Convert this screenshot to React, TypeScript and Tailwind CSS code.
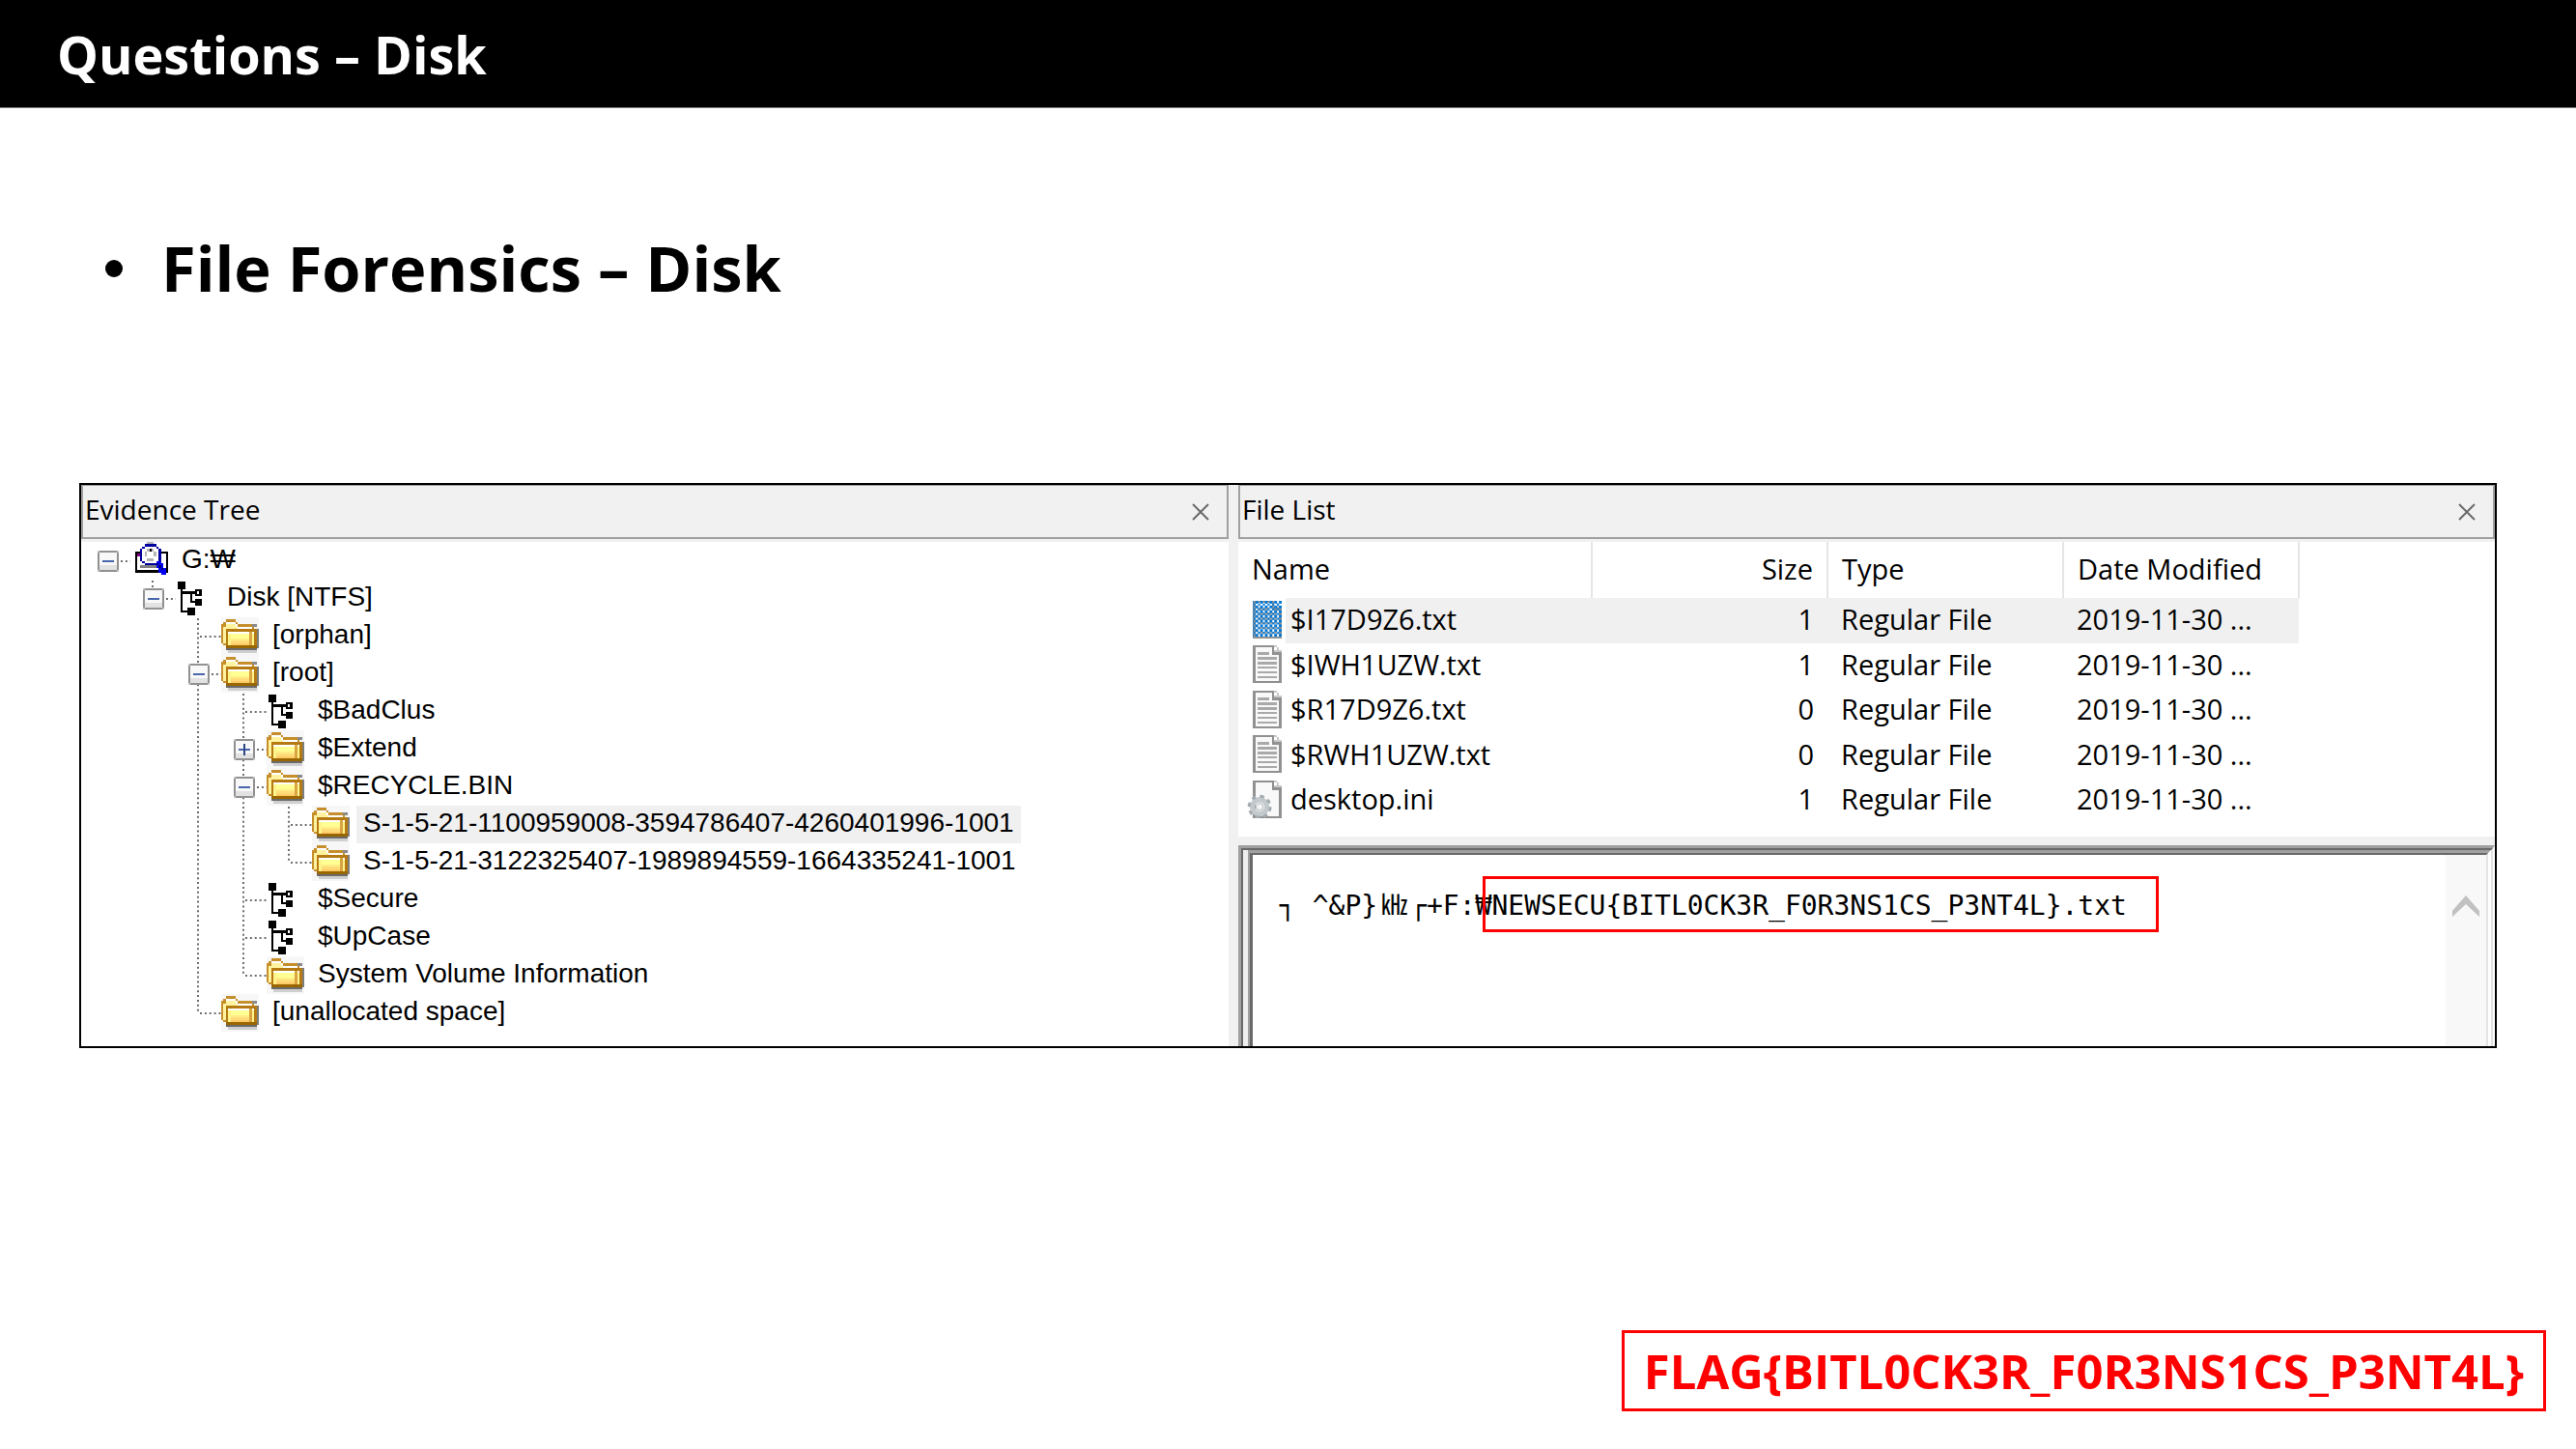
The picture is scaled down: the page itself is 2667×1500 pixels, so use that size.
import { useState } from 'react';
import { clsx } from 'clsx';

type IconName = 'drive' | 'branch' | 'folder';

// guides: one character per indent level
// ' ' empty, '|' line, 't' tee, 'l' last child, 'r' root box, 'e' box on last child, '-' open box, '+' closed box
const tree: { label: string; icon: IconName; guides: string }[] = [
  { label: 'G:₩', icon: 'drive', guides: 'r' },
  { label: 'Disk [NTFS]', icon: 'branch', guides: ' e' },
  { label: '[orphan]', icon: 'folder', guides: '  t' },
  { label: '[root]', icon: 'folder', guides: '  -' },
  { label: '$BadClus', icon: 'branch', guides: '  |t' },
  { label: '$Extend', icon: 'folder', guides: '  |+' },
  { label: '$RECYCLE.BIN', icon: 'folder', guides: '  |-' },
  { label: 'S-1-5-21-1100959008-3594786407-4260401996-1001', icon: 'folder', guides: '  ||t' },
  { label: 'S-1-5-21-3122325407-1989894559-1664335241-1001', icon: 'folder', guides: '  ||l' },
  { label: '$Secure', icon: 'branch', guides: '  |t' },
  { label: '$UpCase', icon: 'branch', guides: '  |t' },
  { label: 'System Volume Information', icon: 'folder', guides: '  |l' },
  { label: '[unallocated space]', icon: 'folder', guides: '  l' },
];

const files = [
  { name: '$I17D9Z6.txt', size: 1 },
  { name: '$IWH1UZW.txt', size: 1 },
  { name: '$R17D9Z6.txt', size: 0 },
  { name: '$RWH1UZW.txt', size: 0 },
  { name: 'desktop.ini', size: 1 },
];

function FolderIcon() {
  return (
    <svg className="size-[39px] shrink-0" viewBox="0 0 16 16" shapeRendering="crispEdges">
      <rect width="16" height="16" fill="#f7f7f7" />
      <rect x="2" y="13" width="13" height="1" fill="#6b6b6b" />
      <rect x="3" y="14" width="12" height="1" fill="#cfcfcf" />
      <rect x="15" y="5" width="1" height="8" fill="#7d7d7d" />
      <rect x="13" y="3" width="2" height="1" fill="#8a8a8a" />
      <path d="M0 3h1V2h1V1h4v1h1v1h6v1h1v1h1v7h-1v1H2v-1H1v-1H0z" fill="#c68f2b" />
      <path d="M2 2h4v1h1v1h6v1H7V4H2z" fill="#fff" />
      <path d="M1 4h1V3h4v1h1v1H3v6H1z" fill="#fff3a0" />
      <path d="M2 5h13v8H2z" fill="#b57b12" />
      <path d="M3 6h11v1H3z" fill="#fff" />
      <path d="M3 7h11v2H3z" fill="#ffff93" />
      <path d="M3 9h11v1H3z" fill="#ffee88" />
      <path d="M3 10h11v1H3z" fill="#ffdc78" />
      <path d="M3 11h11v1H3z" fill="#ffcb69" />
      <path d="M12 6h1v6h-1z" fill="#d9a441" />
      <path d="M13 7h1v5h-1zM3 7h1v5H3z" fill="#fff38c" />
      <path d="M2 12h13v1H2z" fill="#996600" />
    </svg>
  );
}

function BranchIcon() {
  return (
    <svg className="size-[39px] shrink-0" viewBox="0 0 16 16" shapeRendering="crispEdges">
      <path d="M1 1h3v3H1zM9 8h2v1H9zM5 12h3v3H5z" />
      <path d="M2 4h1v9H2zM2 13h3v1H2zM3 5h5v1H3zM6 6h1v3H6zM6 9h3v1H6z" />
      <path d="M8 4h3v3H8zM8 8h3v3H8z" />
      <path d="M9 5h1v1H9z" fill="#fff" />
    </svg>
  );
}

function DriveIcon() {
  return (
    <svg className="size-[39px] shrink-0" viewBox="-1 0 16 16" shapeRendering="crispEdges">
      <path d="M1 4h14v9H1z" />
      <path d="M2 5h12v7H2z" fill="#fff" />
      <path d="M3 10h8v1H3z" fill="#808080" />
      <path d="M2 5h1v1H2zM5 9h1v1H5z" fill="#800080" />
      <path d="M5 1h5v1h1v1h1v5h-1v1h-1v1H5V9H4V8H3V3h1V2h1z" fill="#0000a0" />
      <path d="M5 2h5v1h1v5h-1v1H5V8H4V3h1z" fill="#fff" />
      <path d="M6 0h3v1H6zM6 3h1v1H6zM8 3h1v1H8zM5 4h1v2H5zM9 4h1v2H9zM6 7h3v1H6z" fill="#b4b4b4" />
      <path d="M7 3h1v1H7z" />
      <path d="M10 8h2v1h1v2h1v3h-2v-1h-1v-2h-1z" fill="#0000f0" />
      <path d="M10 9h1v1h1v1h1v1h-1v-1h-1v-1h-1z" fill="#000082" />
    </svg>
  );
}

function TreeIcon({ name }: { name: IconName }) {
  if (name === 'folder') return <FolderIcon />;
  if (name === 'branch') return <BranchIcon />;
  return <DriveIcon />;
}

function Guide({ kind }: { kind: string }) {
  const hasBox = 're-+'.includes(kind);
  const above = '|tle-+'.includes(kind);
  const below = '|t-+'.includes(kind);
  const right = kind !== ' ' && kind !== '|';

  return (
    <span className="relative flex h-[39px] w-[47px] shrink-0 items-center justify-center">
      <svg className="absolute inset-0" width="47" height="39" viewBox="0 0 47 39" stroke="#6e6e6e" strokeWidth="2" strokeDasharray="2 2.875">
        {above && <path d="M23 1V20" />}
        {below && <path d="M23 20.5V39" />}
        {right && <path d={hasBox ? 'M37 20H48' : 'M25 20H48'} />}
      </svg>
      {hasBox && (
        <button type="button" aria-label={kind === '+' ? 'Expand' : 'Collapse'} className="relative">
          <svg className="block" width="22" height="22" viewBox="0 0 9 9" shapeRendering="crispEdges">
            <path d="M0 0h9v9H0z" fill="#c4c4c4" />
            <path d="M1 0h7v1h1v7H8v1H1V8H0V1h1z" fill="#919191" />
            <path d="M1 1h7v7H1z" fill="#f8f8f8" />
            <path d="M1 6h7v2H1z" fill="#e2e2e2" />
            <path d="M2 4h5v1H2z" fill="#4a66ac" />
            {kind === '+' && <path d="M4 2h1v5H4z" fill="#2c4684" />}
          </svg>
        </button>
      )}
    </span>
  );
}

function PageIcon({ selected, gear }: { selected?: boolean; gear?: boolean }) {
  return (
    <svg className="-ml-[10px] block h-[39px] w-[39px] shrink-0" viewBox="0 0 16 16" shapeRendering="crispEdges">
      {selected && (
        <defs>
          <pattern id="dither" width="2" height="2" patternUnits="userSpaceOnUse">
            <path d="M0 0h1v1H0zM1 1h1v1H1z" fill="#0078d7" />
          </pattern>
        </defs>
      )}
      <path d="M3 0h9v1h1v1h1v1h1v13H3z" fill="#919191" />
      <path d="M4 1h7v3h3v11H4z" fill="#f9f9f9" />
      <path d="M12 0h1v1h1v1h1v1h-3z" fill="#c9c9c9" />
      <path d="M12 1h1v1h-1z" fill="#fff" />
      {!gear && <path d="M5 3h5v1H5zM5 5h8v1H5zM5 7h8v1H5zM5 9h8v1H5zM5 11h8v1H5zM5 13h8v1H5z" fill="#a9a9a9" />}
      {gear && (
        <g shapeRendering="auto">
          <circle cx="5.8" cy="11.2" r="3.1" fill="none" stroke="#c3c9cd" strokeWidth="2.2" />
          <circle cx="5.8" cy="11.2" r="4.5" fill="none" stroke="#a3abb0" strokeWidth="1.2" strokeDasharray="1.8 1.73" />
          <circle cx="5.8" cy="11.2" r="1.5" fill="#f4f4f4" stroke="#a9b1b6" strokeWidth="0.4" />
        </g>
      )}
      {selected && <path d="M3 0h12v15H3z" fill="url(#dither)" />}
    </svg>
  );
}

function PaneHeader({ title }: { title: string }) {
  return (
    <div className="h-[59px] shrink-0 bg-[#f1f1f1]">
      <div className="flex h-[56px] items-center justify-between border-2 border-t border-[#a0a0a0] pr-[18px] pl-[2px]">
        <h3 className="pb-[5px] text-[28px] leading-[36px]">{title}</h3>
        <button type="button" aria-label={`Close ${title}`}>
          <svg width="18" height="18" viewBox="0 0 18 18" stroke="#6a6a6a" strokeWidth="2">
            <path d="M1 1l16 16M17 1L1 17" />
          </svg>
        </button>
      </div>
    </div>
  );
}

function EvidenceTree() {
  const [selected, setSelected] = useState(7);

  return (
    <section className="min-w-0 bg-white">
      <PaneHeader title="Evidence Tree" />
      <ul className="pl-1 font-['Liberation_Sans','Noto_Sans_CJK_KR',sans-serif] text-[28px]">
        {tree.map((node, i) => (
          <li key={node.label} className="flex h-[39px] items-center" onClick={() => setSelected(i)}>
            {node.guides.split('').map((kind, level) => (
              <Guide key={level} kind={kind} />
            ))}
            <TreeIcon name={node.icon} />
            <span
              className={clsx(
                'ml-[7px] px-[7px] pb-[3px] leading-[36px] whitespace-nowrap',
                i === selected && 'bg-[#f0f0f0]'
              )}
            >
              {node.label}
            </span>
          </li>
        ))}
      </ul>
    </section>
  );
}

function FileList() {
  const [selected, setSelected] = useState(0);

  return (
    <div className="h-[305px] bg-white">
      <table className="table-fixed border-collapse text-left text-[29px] leading-[36px]">
        <colgroup>
          <col className="w-[49px]" />
          <col className="w-[317px]" />
          <col className="w-[244px]" />
          <col className="w-[244px]" />
          <col className="w-[244px]" />
        </colgroup>
        <thead>
          <tr className="h-[58px]">
            <th colSpan={2} className="border-r-2 border-[#e5e5e5] pb-[3px] pl-[14px] font-normal">Name</th>
            <th className="border-r-2 border-[#e5e5e5] pr-[14px] pb-[3px] text-right font-normal">Size</th>
            <th className="border-r-2 border-[#e5e5e5] pb-[3px] pl-[14px] font-normal">Type</th>
            <th className="border-r-2 border-[#e5e5e5] pb-[3px] pl-[14px] font-normal">Date Modified</th>
          </tr>
        </thead>
        <tbody>
          {files.map((file, i) => (
            <tr key={file.name} className="h-[47px] even:h-[46px]" onClick={() => setSelected(i)}>
              <td className="bg-white pb-[3px] pl-[18px]">
                <PageIcon selected={i === selected} gear={file.name.endsWith('.ini')} />
              </td>
              <td className={clsx('pb-[3px] pl-[5px]', i === selected && 'bg-[#f0f0f0]')}>{file.name}</td>
              <td className={clsx('pr-[14px] pb-[3px] text-right', i === selected && 'bg-[#f0f0f0]')}>{file.size}</td>
              <td className={clsx('pb-[3px] pl-[14px]', i === selected && 'bg-[#f0f0f0]')}>Regular File</td>
              <td className={clsx('pb-[3px] pl-[14px]', i === selected && 'bg-[#f0f0f0]')}>2019-11-30 ...</td>
            </tr>
          ))}
        </tbody>
      </table>
    </div>
  );
}

function Viewer() {
  return (
    <div className="mt-[9px] flex flex-1 border-t-[3px] border-r-2 border-l-[3px] border-t-[#a0a0a0] border-r-white border-l-[#a0a0a0]">
      <div className="flex flex-1 border-t-2 border-r-2 border-l-2 border-t-[#696969] border-r-[#e3e3e3] border-l-[#696969] bg-[#efefef] pl-[5px]">
        <div className="flex flex-1 border-t-[3px] border-r-[3px] border-l-2 border-t-[#a0a0a0] border-r-white border-l-[#a0a0a0]">
          <div className="flex flex-1 justify-between border-t-2 border-r-2 border-l-[3px] border-t-[#696969] border-r-[#e3e3e3] border-l-[#696969] bg-white">
            <p className="mt-[22px] ml-7 flex h-[58px] items-center font-['DejaVu_Sans_Mono','Noto_Sans_CJK_KR',monospace] text-[28px] leading-[36px] whitespace-pre">
              <span className="pt-1">┐ ^&amp;P{'}'}</span>
              <span className="w-[34px] pt-1 text-center">㎑</span>
              <span className="pt-1">┌+F:₩</span>
              <mark className="-ml-[9px] flex h-[58px] items-center border-[3px] border-[#ff0000] bg-transparent pt-1 pr-[30px] pl-[6px] text-black">
                NEWSECU{'{'}BITL0CK3R_F0R3NS1CS_P3NT4L{'}'}.txt
              </mark>
            </p>
            <div className="w-[42px] bg-[#f8f8f8] pt-[42px]">
              <button type="button" aria-label="Scroll up" className="mx-auto block w-7">
                <svg width="28" height="22" viewBox="0 0 28 22" fill="#c1c1c1">
                  <path d="M14 0L28 16V22L14 9L0 22V16z" />
                </svg>
              </button>
            </div>
          </div>
        </div>
      </div>
    </div>
  );
}

export default function App() {
  return (
    <div className="flex min-h-screen flex-col bg-white font-['Open_Sans','Noto_Sans_CJK_KR',sans-serif] text-black">
      <header className="flex h-28 items-center border-b border-[#7f7f7f] bg-black pl-[59px]">
        <h1 className="text-[54px] leading-[72px] font-bold text-white">Questions – Disk</h1>
      </header>

      <main className="flex flex-1 flex-col">
        <ul className="mt-[125px] pl-[109px]">
          <li className="flex items-center">
            <span className="mt-[2px] mr-10 size-[18px] rounded-full bg-black" />
            <h2 className="text-[65px] leading-[80px] font-bold">File Forensics – Disk</h2>
          </li>
        </ul>

        <div className="mx-[82px] mt-[183px] grid h-[585px] grid-cols-[1188fr_10px_1301fr] border-2 border-black">
          <EvidenceTree />
          <div className="bg-[#f1f1f1]" />
          <section className="flex min-w-0 flex-col bg-[#f1f1f1]">
            <PaneHeader title="File List" />
            <FileList />
            <Viewer />
          </section>
        </div>

        <p className="mt-auto mr-[31px] mb-[39px] flex h-[84px] items-center self-end border-[3px] border-[#ff0000] px-5 text-[49px] leading-[60px] font-bold text-[#ff0000]">
          FLAG{'{'}BITL0CK3R_F0R3NS1CS_P3NT4L{'}'}
        </p>
      </main>
    </div>
  );
}
